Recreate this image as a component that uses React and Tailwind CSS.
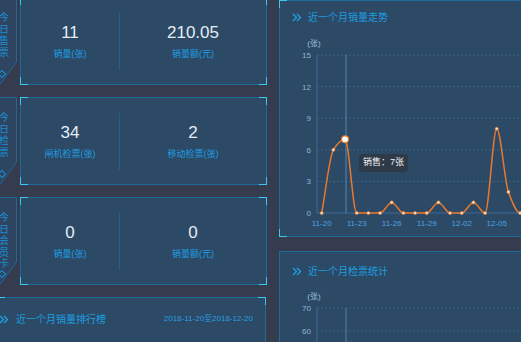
import React from "react";

const FONT = { fontFamily: '"Liberation Sans", "Noto Sans CJK SC", sans-serif' };

const sales = [0, 6, 7, 0, 0, 0, 1, 0, 0, 0, 1, 0, 0, 1, 0, 8, 2, 0, 0];
const X0 = 321.7;
const DX = 11.67;
const Y0 = 213;
const DY = 10.53;

// monotone cubic so flat runs of zeros stay flat
function smoothPath(pts) {
  const n = pts.length;
  const d = [];
  for (let i = 0; i < n - 1; i++) d.push((pts[i + 1][1] - pts[i][1]) / (pts[i + 1][0] - pts[i][0]));
  const m = pts.map((_, i) => {
    if (i === 0) return d[0];
    if (i === n - 1) return d[n - 2];
    if (d[i - 1] * d[i] <= 0) return 0;
    return 2 / (1 / d[i - 1] + 1 / d[i]);
  });
  let s = `M${pts[0][0]} ${pts[0][1]}`;
  for (let i = 0; i < n - 1; i++) {
    const h = (pts[i + 1][0] - pts[i][0]) / 3;
    s += ` C${pts[i][0] + h} ${pts[i][1] + m[i] * h} ${pts[i + 1][0] - h} ${pts[i + 1][1] - m[i + 1] * h} ${pts[i + 1][0]} ${pts[i + 1][1]}`;
  }
  return s;
}

const Chevrons = () => (
  <svg width="10" height="9" viewBox="0 0 10 9" fill="none" stroke="#1e9fe0" strokeWidth="1.4">
    <path d="M1 1 L4.5 4.5 L1 8" />
    <path d="M5 1 L8.5 4.5 L5 8" />
  </svg>
);

const Corners = () => (
  <>
    <span className="absolute -left-px -top-px w-[8px] h-[8px] border-l border-t border-[#3cc6f0]" />
    <span className="absolute -right-px -top-px w-[8px] h-[8px] border-r border-t border-[#3cc6f0]" />
    <span className="absolute -left-px -bottom-px w-[8px] h-[8px] border-l border-b border-[#3cc6f0]" />
    <span className="absolute -right-px -bottom-px w-[8px] h-[8px] border-r border-b border-[#3cc6f0]" />
  </>
);

const Tab = ({ label }) => (
  <div className="relative w-[20px] h-[88px] shrink-0">
    <svg className="absolute inset-0" width="20" height="88" viewBox="0 0 20 88">
      <polygon points="0,0.5 19.5,0.5 19.5,65 3,87.5 0,87.5" fill="#2d4561" stroke="#22679a" strokeWidth="1" />
    </svg>
    <div className="relative flex flex-col items-center w-[14px] pt-[15px] text-[10px] leading-[11.5px] text-[#1b8fd0]">
      {label.split("").map((c, i) => (
        <span key={i}>{c}</span>
      ))}
    </div>
    <span className="absolute left-[2px] top-[74px] w-[6px] h-[6px] rotate-45 border border-[#1b8fd0]" />
  </div>
);

const Stat = ({ value, label }) => (
  <div className="flex flex-col items-center gap-[8px]">
    <span className="text-[17px] leading-[17px] text-[#e3edf5]">{value}</span>
    <span className="text-[9px] leading-[10px] text-[#1f9ee0]">{label}</span>
  </div>
);

const StatCard = ({ tab, a, b }) => (
  <div className="flex gap-[3px]">
    <Tab label={tab} />
    <div className="relative w-[247px] h-[88px] bg-[#2c4966] border border-[#1f6a9b] flex items-center">
      <Corners />
      <div className="w-[98px] flex justify-center">
        <Stat {...a} />
      </div>
      <div className="w-px h-[57px] bg-[#24608e]" />
      <div className="flex-1 flex justify-center">
        <Stat {...b} />
      </div>
    </div>
  </div>
);

const PanelTitle = ({ children, h }) => (
  <div className={`flex items-center gap-[6px] pl-[12px] ${h}`}>
    <Chevrons />
    <span className="text-[10px] text-[#1e9fe0]">{children}</span>
  </div>
);

const SalesChart = () => {
  const pts = sales.map((v, i) => [X0 + i * DX, Y0 - v * DY]);
  const labels = ["11-20", "11-23", "11-26", "11-29", "12-02", "12-05"];
  return (
    <svg width="259" height="203" viewBox="280 33 259 203" style={FONT}>
      {[3, 6, 9, 12, 15].map((v) => (
        <line key={v} x1="317" x2="540" y1={Y0 - v * DY} y2={Y0 - v * DY} stroke="#3a6589" strokeDasharray="2 2" />
      ))}
      <line x1="317" x2="317" y1="55" y2="213" stroke="#3b6d96" />
      <line x1="317" x2="540" y1="213" y2="213" stroke="#3b6d96" />
      <line x1="346" x2="346" y1="55" y2="213" stroke="#5089b8" />
      <text x="314" y="46" fontSize="8" fill="#9cc0dc" textAnchor="middle">(张)</text>
      {[0, 3, 6, 9, 12, 15].map((v) => (
        <text key={v} x="311" y={Y0 - v * DY + 3} fontSize="8" fill="#8fb6d6" textAnchor="end">{v}</text>
      ))}
      {labels.map((l, i) => (
        <text key={l} x={X0 + i * 3 * DX} y="226" fontSize="8" fill="#4ea4e0" textAnchor="middle">{l}</text>
      ))}
      <path d={smoothPath(pts)} fill="none" stroke="#e8792b" strokeWidth="1.5" />
      {pts.map(([x, y], i) =>
        i === 2 ? (
          <circle key={i} cx={x} cy={y} r="3.5" fill="#ffffff" stroke="#e8792b" strokeWidth="1.2" />
        ) : (
          <circle key={i} cx={x} cy={y} r="1.6" fill="#f7dcc4" stroke="#e8792b" strokeWidth="0.6" />
        )
      )}
    </svg>
  );
};

const CheckChart = () => (
  <svg width="259" height="60" viewBox="280 290 259 60" style={FONT}>
    {[308, 331].map((y) => (
      <line key={y} x1="317" x2="540" y1={y} y2={y} stroke="#3a6589" strokeDasharray="2 2" />
    ))}
    <line x1="317" x2="317" y1="308" y2="350" stroke="#3b6d96" />
    <line x1="346" x2="346" y1="308" y2="350" stroke="#4a80ad" />
    <text x="314" y="299" fontSize="8" fill="#9cc0dc" textAnchor="middle">(张)</text>
    <text x="311" y="311" fontSize="8" fill="#8fb6d6" textAnchor="end">70</text>
    <text x="311" y="334" fontSize="8" fill="#8fb6d6" textAnchor="end">60</text>
  </svg>
);

export default function App() {
  return (
    <div className="w-[521px] h-[342px] overflow-hidden bg-[#343c4e] flex" style={FONT}>
      {/* left column */}
      <div className="ml-[-3px] mt-[-3px] w-[270px] shrink-0 flex flex-col gap-[12px]">
        <StatCard
          tab="今日售票"
          a={{ value: "11", label: "销量(张)" }}
          b={{ value: "210.05", label: "销量额(元)" }}
        />
        <StatCard
          tab="今日检票"
          a={{ value: "34", label: "闸机检票(张)" }}
          b={{ value: "2", label: "移动检票(张)" }}
        />
        <StatCard
          tab="今日会员卡"
          a={{ value: "0", label: "销量(张)" }}
          b={{ value: "0", label: "销量额(元)" }}
        />
        <div className="relative w-[269px] h-[80px] shrink-0 bg-[#2c4966] border border-[#1f6a9b]">
          <Corners />
          <div className="flex items-center justify-between h-[42px] pl-[1px] pr-[12px]">
            <div className="flex items-center gap-[7px]">
              <Chevrons />
              <span className="text-[10px] text-[#1e9fe0]">近一个月销量排行榜</span>
            </div>
            <span className="text-[8px] text-[#2a9fe0]">2018-11-20至2018-12-20</span>
          </div>
        </div>
      </div>

      {/* right column */}
      <div className="ml-[12px] w-[260px] shrink-0 flex flex-col gap-[14px]">
        <div className="relative h-[237px] shrink-0 bg-[#2c4966] border border-[#1f6a9b]">
          <Corners />
          <PanelTitle h="h-[32px]">近一个月销量走势</PanelTitle>
          <SalesChart />
          <div className="absolute left-[79px] top-[153px] px-[4px] h-[18px] flex items-center rounded-sm bg-[#2e3a47] text-[9px] text-[#eef2f5]">
            销售：7张
          </div>
        </div>
        <div className="relative h-[120px] shrink-0 bg-[#2c4966] border border-[#1f6a9b] overflow-hidden">
          <Corners />
          <PanelTitle h="h-[38px]">近一个月检票统计</PanelTitle>
          <CheckChart />
        </div>
      </div>
    </div>
  );
}
